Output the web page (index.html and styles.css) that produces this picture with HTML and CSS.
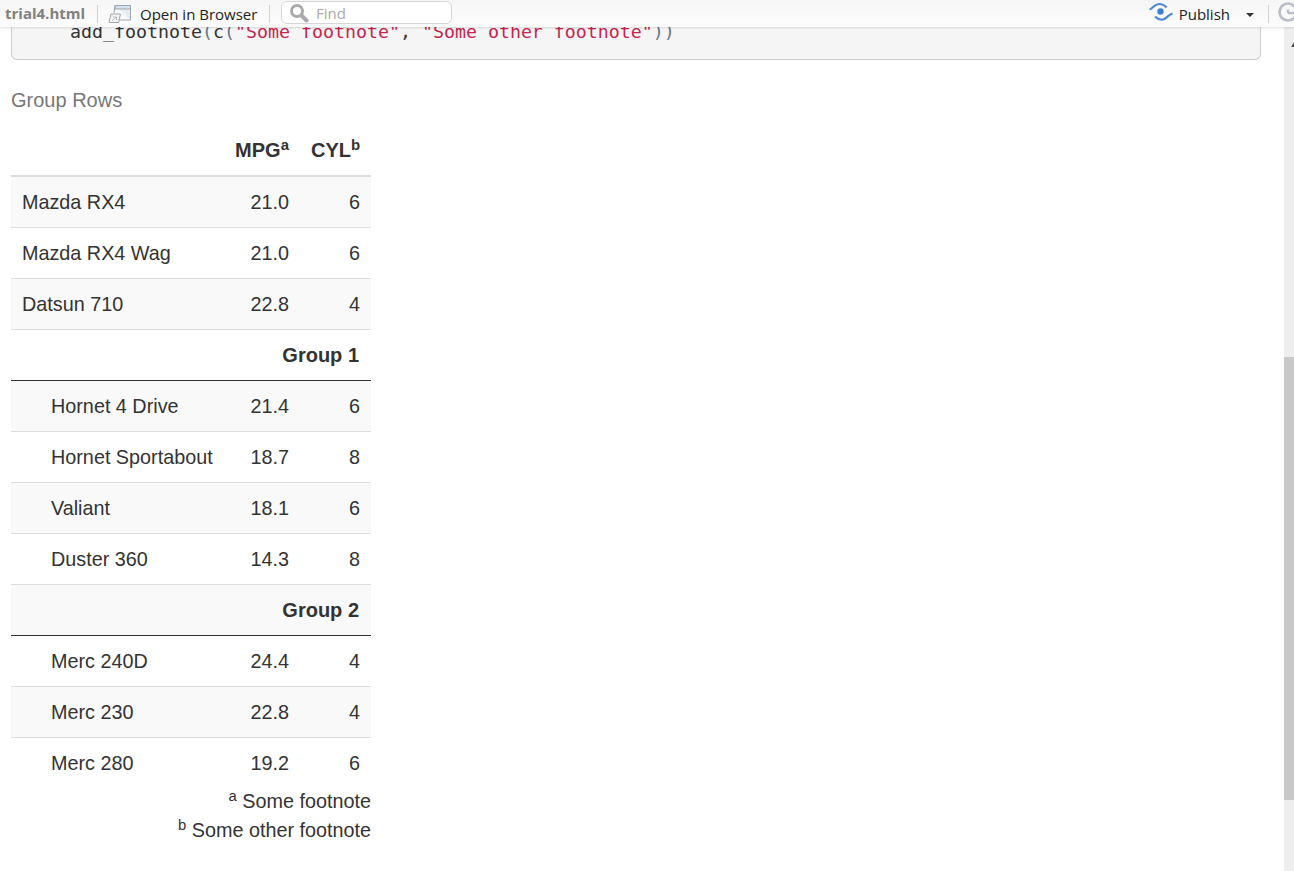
FILE: index.html
```html
<!DOCTYPE html>
<html lang="en">
<head>
<meta charset="utf-8">
<title>trial4.html</title>
<link rel="stylesheet" href="styles.css">
</head>
<body>
<header class="toolbar">
  <span class="file-name">trial4.html</span>
  <span class="sep"></span>
  <svg class="browser-icon" width="26" height="20" viewBox="0 0 26 20"><path d="M7 1.500h15.500v14.500" fill="#e6edf5" stroke="#a0a6ae"/><path d="M7 1.500h15.500v3.500H7z" fill="#d3e0ef" stroke="#a0a6ae"/><path d="M22.500 16H11" stroke="#a0a6ae" fill="none"/><path d="M7 1.500 6 9" stroke="#a0a6ae" fill="none"/><path d="M3 10h9.500l-2 8.500H1z" fill="#f5f5f5" stroke="#a0a6ae"/><path d="M4 17l4-4M5 13h3.500v3" fill="none" stroke="#b8bcc2"/></svg>
  <span class="open-label">Open in Browser</span>
  <span class="sep sep-find"></span>
  <div class="find-box">
    <svg width="20" height="20" viewBox="0 0 20 20"><circle cx="8" cy="8" r="5.500" fill="#fff" stroke="#aaa" stroke-width="3"/><path d="M12.500 12.500l5 5" stroke="#aaa" stroke-width="4" stroke-linecap="round"/></svg>
    <span class="find-label">Find</span>
  </div>
  <span class="spacer"></span>
  <svg class="publish-icon" width="24" height="20" viewBox="0 0 24 20"><circle cx="11.500" cy="9.500" r="3.200" fill="#3f7fd1"/><path d="M0.500 7.500C3.500 7 5 2 10 2c3.500 0 5.500 1 7.500 3.500" fill="none" stroke="#4a87d6" stroke-width="2.200"/><path d="M6 14.500c2.500 2.500 5 3.500 8 3 4-.8 5-5 9.500-6" fill="none" stroke="#4a87d6" stroke-width="2.200"/></svg>
  <span class="publish-label">Publish</span>
  <span class="caret"></span>
  <span class="sep sep-right"></span>
  <svg class="refresh-icon" width="22" height="22" viewBox="0 0 22 22"><circle cx="11" cy="11" r="8.500" fill="none" stroke="#b9bdc7" stroke-width="2.600"/><path d="M11 12h8M11 12V8.500" fill="none" stroke="#b9bdc7" stroke-width="2.400"/></svg>
</header>
<div class="window">
  <main class="doc">
    <pre class="code"><code>    add_footnote<span class="pun">(</span>c<span class="pun">(</span><span class="str">"Some footnote"</span>, <span class="str">"Some other footnote"</span><span class="pun">))</span></code></pre>
    <table class="data">
      <caption>Group Rows</caption>
      <colgroup><col class="c-name"><col class="c-mpg"><col class="c-cyl"></colgroup>
      <thead>
        <tr><th></th><th class="num">MPG<sup>a</sup></th><th class="num">CYL<sup>b</sup></th></tr>
      </thead>
      <tbody>
        <tr class="odd"><td>Mazda RX4</td><td class="num">21.0</td><td class="num">6</td></tr>
        <tr><td>Mazda RX4 Wag</td><td class="num">21.0</td><td class="num">6</td></tr>
        <tr class="odd"><td>Datsun 710</td><td class="num">22.8</td><td class="num">4</td></tr>
        <tr class="group"><td colspan="3">Group 1</td></tr>
        <tr class="odd"><td class="indent">Hornet 4 Drive</td><td class="num">21.4</td><td class="num">6</td></tr>
        <tr><td class="indent">Hornet Sportabout</td><td class="num">18.7</td><td class="num">8</td></tr>
        <tr class="odd"><td class="indent">Valiant</td><td class="num">18.1</td><td class="num">6</td></tr>
        <tr><td class="indent">Duster 360</td><td class="num">14.3</td><td class="num">8</td></tr>
        <tr class="group odd"><td colspan="3">Group 2</td></tr>
        <tr><td class="indent">Merc 240D</td><td class="num">24.4</td><td class="num">4</td></tr>
        <tr class="odd"><td class="indent">Merc 230</td><td class="num">22.8</td><td class="num">4</td></tr>
        <tr class="last"><td class="indent">Merc 280</td><td class="num">19.2</td><td class="num">6</td></tr>
      </tbody>
      <tfoot>
        <tr><td colspan="3"><sup>a</sup> Some footnote</td></tr>
        <tr><td colspan="3"><sup>b</sup> Some other footnote</td></tr>
      </tfoot>
    </table>
  </main>
  <div class="scrollbar">
    <div class="arrow-zone"><span class="arrow-up"></span></div>
    <div class="track-top"></div>
    <div class="thumb"></div>
    <div class="track-bottom"></div>
  </div>
</div>
</body>
</html>
```
FILE: styles.css
```css
html, body {
  margin: 0;
  padding: 0;
  height: 871px;
  overflow: hidden;
  background: #fff;
}
body {
  position: relative;
  font-family: "Liberation Sans", Arial, sans-serif;
  color: #333;
}
.toolbar {
  position: absolute;
  top: 0;
  left: 0;
  right: 0;
  height: 27px;
  display: flex;
  align-items: center;
  background: linear-gradient(#f6f6f6, #fcfcfc);
  box-shadow: 0 1px 2px rgba(0, 0, 0, .12);
  z-index: 2;
  overflow: hidden;
}
.file-name {
  margin-left: 5px;
  font: bold 15px "Open Sans", sans-serif;
  color: #808080;
  width: 92px;
  margin-top: -2px;
}
.sep {
  width: 1px;
  height: 18px;
  background: #d4d4d4;
}
.browser-icon { margin-left: 10px; margin-top: 1px; }
.open-label {
  margin-left: 6px;
  width: 129px;
  font: 15px "Open Sans", sans-serif;
  color: #222;
}
.find-box {
  margin-left: 11px;
  width: 171px;
  height: 23px;
  margin-top: -2px;
  box-sizing: border-box;
  border: 1px solid #d6d6d6;
  border-radius: 6px;
  background: #fff;
  display: flex;
  align-items: center;
  padding-left: 7px;
}
.find-label {
  margin-left: 7px;
  font: 15px "Open Sans", sans-serif;
  color: #aaa;
}
.spacer { flex: 1; }
.publish-icon { margin-right: 6px; margin-top: -3px; }
.publish-label {
  font: 15px "Open Sans", sans-serif;
  color: #222;
}
.caret {
  margin-left: 16px;
  border-left: 4px solid transparent;
  border-right: 4px solid transparent;
  border-top: 4px solid #333;
  margin-top: 2px;
}
.sep-right { margin-left: 14px; }
.refresh-icon { margin: -3px -5px 0 8px; }
.window {
  display: flex;
  height: 871px;
}
.doc {
  flex: 1;
  min-width: 0;
  padding: 0 23px 0 11px;
}
.code {
  margin: 0;
  padding: 22px 0 16px 14px;
  height: 60px;
  box-sizing: border-box;
  background: #f5f5f5;
  border: 1px solid #ccc;
  border-top: 0;
  border-radius: 0 0 6px 6px;
  font: 18.27px/20px "Liberation Mono", monospace;
  color: #333;
}
.str { color: #c7254e; }
.pun { color: #687687; }
.data {
  margin-top: 15px;
  width: 360px;
  table-layout: fixed;
  border-collapse: separate;
  border-spacing: 0;
  font-size: 19.8px;
  line-height: 28px;
}
caption {
  text-align: left;
  color: #777;
  padding: 11px 0;
  font-size: 20px;
}
.c-name { width: 212px; }
.c-mpg { width: 77px; }
.c-cyl { width: 71px; }
th, td {
  padding: 11px;
  text-align: left;
  white-space: nowrap;
  border-bottom: 1px solid #ddd;
}
th {
  font-weight: bold;
  font-size: 20px;
  border-bottom: 2px solid #ddd;
}
.num { text-align: right; }
.odd td { background: #f9f9f9; }
td.indent { padding-left: 40px; padding-right: 0; }
.group td {
  text-align: right;
  font-weight: bold;
  font-size: 20px;
  padding-right: 12px;
  border-bottom-color: #333;
}
.last td { border-bottom: 0; padding-bottom: 10px; }
sup {
  font-size: 75%;
  line-height: 0;
  position: relative;
  top: -.5em;
  vertical-align: baseline;
}
tfoot td {
  padding: 0;
  border: 0;
  text-align: right;
  line-height: 29px;
}
.scrollbar {
  width: 10px;
  flex: none;
  display: flex;
  flex-direction: column;
  background: #eee;
  overflow: hidden;
}
.arrow-zone {
  height: 50px;
  display: flex;
  padding: 42px 0 0 7px;
  box-sizing: border-box;
}
.arrow-up {
  width: 0;
  height: 0;
  border-left: 3px solid transparent;
  border-right: 3px solid transparent;
  border-bottom: 5px solid #555;
}
.track-top { height: 307px; }
.thumb { height: 443px; background: #c8c8c8; }
.track-bottom { flex: 1; }
```
